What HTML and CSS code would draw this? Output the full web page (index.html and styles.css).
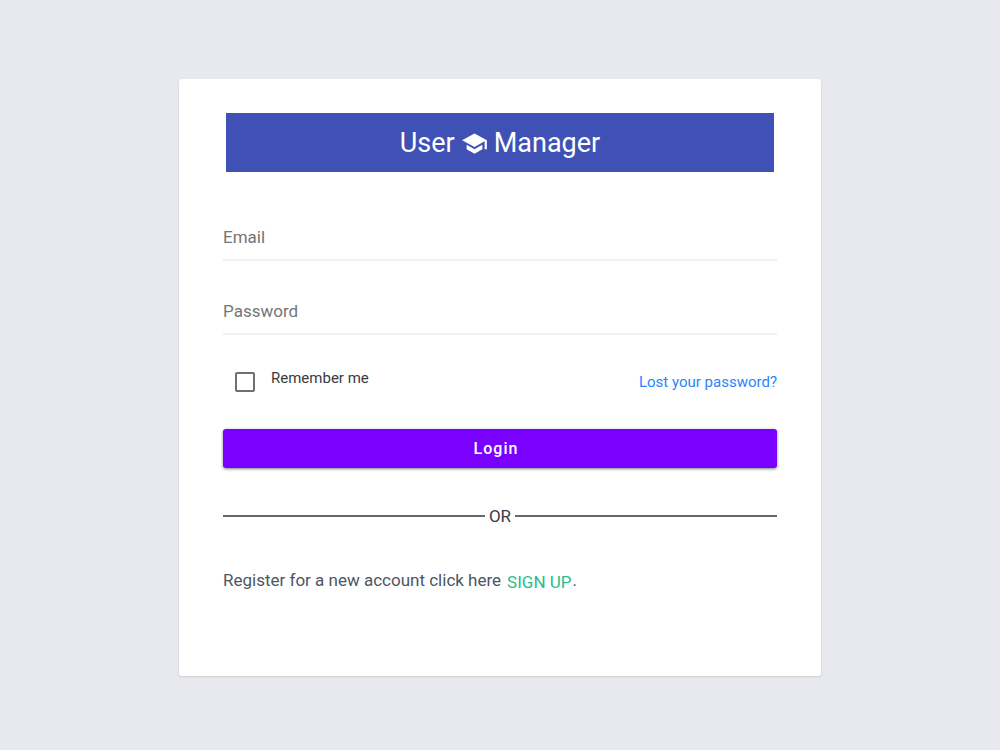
FILE: index.html
```html
<!DOCTYPE html>
<html lang="en">
<head>
<meta charset="utf-8">
<meta name="viewport" content="width=device-width, initial-scale=1">
<title>User Manager</title>
<link rel="stylesheet" href="styles.css">
</head>
<body>
<main class="card">
  <h1 class="brand">
    <span>User</span>
    <svg class="brand-icon" viewBox="0 0 24 24" aria-hidden="true"><path d="M5 13.18v4L12 21l7-3.82v-4L12 17l-7-3.82zM12 3L1 9l11 6 9-4.91V17h2V9L12 3z"/></svg>
    <span>Manager</span>
  </h1>
  <form class="form">
    <input class="field" type="email" placeholder="Email" aria-label="Email">
    <input class="field" type="password" placeholder="Password" aria-label="Password">
    <div class="options">
      <div class="remember">
        <input class="checkbox" type="checkbox" id="remember">
        <label class="remember-label" for="remember">Remember me</label>
      </div>
      <a class="lost" href="#">Lost your password?</a>
    </div>
    <button class="login" type="submit">Login</button>
  </form>
  <div class="divider">OR</div>
  <p class="register"><span>Register for a new account click here</span> <a class="signup" href="#">SIGN UP</a><span>.</span></p>
</main>
</body>
</html>
```
FILE: styles.css
```css
* {
  box-sizing: border-box;
}

body {
  margin: 0;
  min-height: 100vh;
  padding: 16px;
  display: grid;
  place-items: center;
  background: #e8e9ee;
  color: #3b3b3f;
  font-family: Roboto, sans-serif;
  font-size: 17px;
  line-height: 24px;
}

a {
  text-decoration: none;
}

.card {
  width: 100%;
  max-width: 642px;
  margin-top: 5px;
  padding: 34px 44px 82px;
  background: #fff;
  border-radius: 3px;
  box-shadow: 0 1px 2px rgba(0, 0, 0, 0.12);
}

.brand {
  display: flex;
  align-items: center;
  justify-content: center;
  gap: 6px;
  margin: 0 3px;
  padding: 13px 12px 11px;
  background: #3f51b5;
  color: #fff;
  font-size: 27px;
  font-weight: 400;
  line-height: 35px;
}

.brand-icon {
  width: 27px;
  height: 27px;
  fill: currentColor;
}

.form {
  display: flex;
  flex-direction: column;
  margin-top: 43px;
}

.field {
  width: 100%;
  height: 46px;
  margin-bottom: 28px;
  padding: 0;
  border: 0;
  border-bottom: 2px solid #f0f1f3;
  border-radius: 0;
  outline: 0;
  background: transparent;
  color: #3b3b3f;
  font: inherit;
}

.field::placeholder {
  color: #757575;
  opacity: 1;
}

.options {
  display: flex;
  align-items: center;
  justify-content: space-between;
  margin-top: 3px;
  padding-left: 12px;
  font-size: 15px;
}

.remember {
  display: flex;
  align-items: center;
  gap: 16px;
}

.checkbox {
  appearance: none;
  width: 20px;
  height: 20px;
  margin: 0;
  border: 2px solid #6f6f6f;
  border-radius: 2px;
}

.checkbox:checked {
  background: #7a00ff;
}

.remember-label {
  padding-bottom: 8px;
}

.lost {
  color: #2a84ff;
}

.login {
  height: 39px;
  margin-top: 31px;
  padding: 0 16px 0 8px;
  border: 0;
  border-radius: 3px;
  background: #7a00ff;
  box-shadow: 0 1px 3px rgba(0, 0, 0, 0.5);
  color: #fff;
  font: 500 16px/24px Roboto, sans-serif;
  letter-spacing: 1px;
}

.divider {
  display: flex;
  align-items: center;
  gap: 4px;
  margin-top: 36px;
}

.divider::before,
.divider::after {
  content: "";
  flex: 1;
  height: 2px;
  background: #68686a;
}

.register {
  display: flex;
  flex-wrap: wrap;
  margin: 40px 0 0;
  color: #4d5663;
}

.signup {
  margin: 0 1px 0 6px;
  padding-top: 2px;
  color: #2abd8c;
}
```
